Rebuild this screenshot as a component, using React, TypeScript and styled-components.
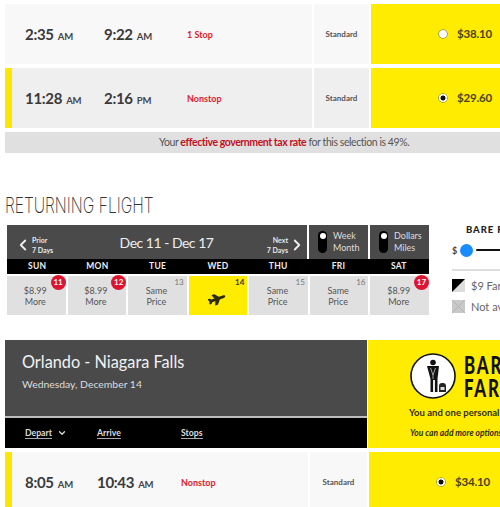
import React from "react";
import styled, { createGlobalStyle } from "styled-components";
import { ChevronLeft, ChevronRight, ChevronDown } from "lucide-react";
import { FaPlane } from "react-icons/fa";

const Global = createGlobalStyle`
  html, body { margin: 0; padding: 0; background: #fff; overflow: hidden; }
  * { box-sizing: border-box; }
`;
const Viewport = styled.div`
  width: 500px; height: 507px; overflow: hidden;
  font-family: "Lato", "Noto Sans", sans-serif; color: #444;
`;
const Page = styled.div`
  width: 700px; padding: 4px 0 0 5px;
  display: flex; flex-direction: column; align-items: flex-start;
`;
const Row = styled.div<{ $left: number; $std: number; $h: number; $top?: number }>`
  display: grid; width: 695px; height: ${p => p.$h}px; flex: none;
  grid-template-columns: ${p => p.$left}px ${p => p.$std}px 1fr;
  column-gap: 2px; margin-top: ${p => p.$top ?? 0}px;
`;
const Info = styled.div<{ $bg: string; $bar?: boolean; $dep: number; $arr: number }>`
  background: ${p => p.$bg};
  border-left: ${p => (p.$bar ? "7px solid #ffe600" : "0")};
  padding-left: ${p => (p.$bar ? 13 : 20)}px;
  display: grid; align-items: center;
  grid-template-columns: ${p => p.$dep}px ${p => p.$arr}px 1fr;
`;
const Time = styled.span`
  font-size: 15px; font-weight: 700; color: #3a3a3a; letter-spacing: -0.3px; white-space: nowrap;
`;
const Meridiem = styled.span`
  font-size: 9.5px; font-weight: 700; margin-left: 4px; color: #444; letter-spacing: -0.2px;
`;
const Stop = styled.span`
  font-size: 9px; font-weight: 700; color: #dd1c2e;
`;
const Std = styled.div<{ $bg: string }>`
  background: ${p => p.$bg};
  display: flex; align-items: center; justify-content: center;
  font-size: 8px; font-weight: 700; color: #555; padding-bottom: 1px;
`;
const Fare = styled.div<{ $pad: number }>`
  background: #ffec00; display: flex; align-items: center; gap: 10px;
  padding-left: ${p => p.$pad}px; padding-bottom: 1px;
`;
const Radio = styled.span<{ $on?: boolean }>`
  width: 8px; height: 8px; border-radius: 50%; flex: none;
  background: ${p => (p.$on ? "radial-gradient(circle, #111 0 2.2px, #fff 2.8px)" : "#fff")};
  box-shadow: 0 0 0 0.6px #666;
`;
const Price = styled.span`
  font-size: 11.5px; font-weight: 700; color: #4a4318; letter-spacing: -0.2px;
`;
const Notice = styled.div`
  width: 695px; height: 21px; margin-top: 4px; background: #e0e0e0; letter-spacing: -0.43px;
  font-size: 10.5px; line-height: 21px; color: #555; padding-left: 154px; white-space: nowrap;
`;
const Strong = styled.b`
  color: #c3101f; font-weight: 700;
`;
const Heading = styled.h2`
  margin: 39px 0 0 0; height: 26px; font: 200 22px/26px "Inter", sans-serif; color: #333;
  transform: scaleX(0.71); transform-origin: left center; white-space: nowrap;
`;
const CalRow = styled.div`
  display: flex; margin: 7px 0 0 2px; gap: 23px;
`;
const Cal = styled.div`
  width: 422px; display: flex; flex-direction: column;
`;
const CalHead = styled.div`
  height: 34px; display: grid; grid-template-columns: 300px 59px 59px; column-gap: 2px;
`;
const WeekNav = styled.div`
  background: #4a4a4a; display: flex; align-items: center; color: #eee; padding: 6px 1px 0 7px;
`;
const NavNote = styled.div<{ $end?: boolean }>`
  font-size: 7px; font-weight: 700; line-height: 10px; color: #e8e8e8; width: 24px; margin-left: 0;
  text-align: ${p => (p.$end ? "right" : "left")};
`;
const Range = styled.div`
  flex: 1; text-align: center; font-size: 14px; color: #eee; padding: 0 0 6px 13px; letter-spacing: -0.5px;
`;
const ToggleCell = styled.div`
  background: #4a4a4a; display: flex; align-items: center; gap: 6px; padding-left: 9px;
`;
const Pill = styled.div`
  position: relative; width: 9px; height: 22px; border-radius: 5px; background: #000;
  &::after { content: ""; position: absolute; left: 1.5px; top: 2px; width: 6px; height: 6px; border-radius: 50%; background: #fff; }
`;
const ToggleText = styled.div`
  font-size: 9px; line-height: 12px; color: #ddd;
`;
const Days = styled.div`
  height: 15px; background: #000; display: grid; grid-template-columns: repeat(7, 1fr);
`;
const Day = styled.div`
  color: #eee; font-size: 8.5px; font-weight: 700; text-align: center; line-height: 15px; letter-spacing: 0.3px;
`;
const Cells = styled.div`
  margin-top: 2px; display: grid; grid-template-columns: repeat(7, 1fr); column-gap: 2px; height: 39px;
`;
const Cell = styled.div<{ $sel?: boolean }>`
  position: relative; background: ${p => (p.$sel ? "#ffec00" : "#e0e0e0")};
  display: flex; flex-direction: column; align-items: center; justify-content: center;
  font-size: 9px; line-height: 11.5px; color: #555; padding-top: 1px; padding-right: 2px;
`;
const Badge = styled.span`
  position: absolute; top: -1px; right: 0; width: 15px; height: 15px; border-radius: 50%;
  background: #dd1430; color: #fff; font-size: 8px; font-weight: 700; line-height: 14px; text-align: center;
`;
const DayNum = styled.span<{ $sel?: boolean }>`
  position: absolute; top: 1px; right: 3px; font-size: 8px; line-height: 10px;
  color: ${p => (p.$sel ? "#333" : "#777")}; font-weight: ${p => (p.$sel ? 700 : 400)};
`;
const PlaneIcon = styled(FaPlane)`
  width: 18px; height: 18px; color: #2c2a10; transform: rotate(-20deg) scaleY(0.7); margin-top: 5px;
`;
const Legend = styled.div`
  width: 200px; display: flex; flex-direction: column;
`;
const LegendTitle = styled.div`
  font: 900 9.5px/12px "Lato", sans-serif; letter-spacing: 0.9px; color: #222; margin-left: 14px; margin-top: -1px;
`;
const SliderRow = styled.div`
  display: flex; align-items: center; margin-top: 7px; height: 14px; font-size: 9px; font-weight: 700; color: #444;
`;
const Knob = styled.span`
  width: 13px; height: 13px; border-radius: 50%; background: #1b8cff; margin: 0 3px 0 3px; flex: none;
`;
const Track = styled.span`
  width: 140px; height: 2px; background: #111; border-radius: 1px;
`;
const Rule = styled.div`
  height: 2px; background: #ddd; margin-top: 12px; width: 170px;
`;
const Key = styled.div`
  display: flex; align-items: center; gap: 6px; height: 13px; font-size: 11px; color: #666; white-space: nowrap;
  margin-top: 8px;
`;
const Swatch = styled.svg`
  width: 13px; height: 13px; flex: none; display: block;
`;
const Section = styled.div`
  margin-top: 25px; display: grid; grid-template-columns: 362px 1fr; column-gap: 1px; width: 695px; height: 108px;
`;
const SectionMain = styled.div`
  display: flex; flex-direction: column;
`;
const Title = styled.div`
  height: 76px; background: #4a4a4a; padding: 11px 0 0 17px; color: #fff;
`;
const City = styled.div`
  font-size: 16.3px; line-height: 22px; color: #f2f2f2;
`;
const DateText = styled.div`
  font-size: 10.4px; line-height: 14px; margin-top: 4px; color: #ddd;
`;
const SortBar = styled.div`
  border-top: 2px solid #bdbdbd; height: 32px; background: #000;
  display: grid; grid-template-columns: 72px 84px 1fr; align-items: center; padding: 0 0 0 20px;
`;
const SortItem = styled.div`
  display: flex; align-items: center; gap: 5px; color: #ddd; font-size: 8.7px; font-weight: 700;
`;
const SortLabel = styled.span`
  border-bottom: 1px solid #aaa; line-height: 11px;
`;
const Promo = styled.div`
  background: #ffec00; display: flex; flex-direction: column; padding: 13px 0 0 41px; overflow: hidden;
`;
const PromoTop = styled.div`
  display: flex; align-items: center; gap: 8px; margin-left: 1px;
`;
const BareName = styled.div`
  font: 900 24px/23px "Lato", sans-serif; letter-spacing: 2.6px; color: #111;
  transform: scaleX(0.7); transform-origin: left center;
`;
const PromoLine = styled.div`
  font-size: 9.5px; font-weight: 700; color: #332e0a; white-space: nowrap; margin-top: 7px; line-height: 14px;
`;
const PromoNote = styled.div`
  font-size: 8.5px; font-weight: 700; font-style: italic; color: #332e0a; white-space: nowrap; margin-top: 7px;
  line-height: 12px; margin-left: 1px;
`;

type Flight = { dep: string; depM: string; arr: string; arrM: string; stop: string };
const Times: React.FC<Flight> = ({ dep, depM, arr, arrM, stop }) => (
  <>
    <Time>{dep}<Meridiem>{depM}</Meridiem></Time>
    <Time>{arr}<Meridiem>{arrM}</Meridiem></Time>
    <Stop>{stop}</Stop>
  </>
);

const days = ["SUN", "MON", "TUE", "WED", "THU", "FRI", "SAT"];
const cells = [
  { n: 11, a: "$8.99", b: "More", red: true },
  { n: 12, a: "$8.99", b: "More", red: true },
  { n: 13, a: "Same", b: "Price" },
  { n: 14, sel: true },
  { n: 15, a: "Same", b: "Price" },
  { n: 16, a: "Same", b: "Price" },
  { n: 17, a: "$8.99", b: "More", red: true },
];

export default function App() {
  return (
    <Viewport>
      <Global />
      <Page>
        <Row $left={307} $std={55} $h={60}>
          <Info $bg="#f8f8f8" $dep={79} $arr={83}>
            <Times dep="2:35" depM="AM" arr="9:22" arrM="AM" stop="1 Stop" />
          </Info>
          <Std $bg="#f8f8f8">Standard</Std>
          <Fare $pad={68}><Radio /><Price>$38.10</Price></Fare>
        </Row>
        <Row $left={307} $std={55} $h={60} $top={4}>
          <Info $bg="#f0eff0" $bar $dep={79} $arr={83}>
            <Times dep="11:28" depM="AM" arr="2:16" arrM="PM" stop="Nonstop" />
          </Info>
          <Std $bg="#f0eff0">Standard</Std>
          <Fare $pad={68}><Radio $on /><Price>$29.60</Price></Fare>
        </Row>
        <Notice>Your <Strong>effective government tax rate</Strong> for this selection is 49%.</Notice>
        <Heading>RETURNING FLIGHT</Heading>
        <CalRow>
          <Cal>
            <CalHead>
              <WeekNav>
                <ChevronLeft size={18} strokeWidth={2.4} />
                <NavNote>Prior<br />7 Days</NavNote>
                <Range>Dec 11 - Dec 17</Range>
                <NavNote $end>Next<br />7 Days</NavNote>
                <ChevronRight size={18} strokeWidth={2.4} />
              </WeekNav>
              <ToggleCell><Pill /><ToggleText>Week<br />Month</ToggleText></ToggleCell>
              <ToggleCell><Pill /><ToggleText>Dollars<br />Miles</ToggleText></ToggleCell>
            </CalHead>
            <Days>{days.map(d => <Day key={d}>{d}</Day>)}</Days>
            <Cells>
              {cells.map(c => (
                <Cell key={c.n} $sel={c.sel}>
                  {c.red ? <Badge>{c.n}</Badge> : <DayNum $sel={c.sel}>{c.n}</DayNum>}
                  {c.sel ? <PlaneIcon /> : <><span>{c.a}</span><span>{c.b}</span></>}
                </Cell>
              ))}
            </Cells>
          </Cal>
          <Legend>
            <LegendTitle>BARE FARE</LegendTitle>
            <SliderRow>$<Knob /><Track /></SliderRow>
            <Rule />
            <Key>
              <Swatch viewBox="0 0 13 13"><rect width="13" height="13" fill="#ddd" /><polygon points="0,0 13,0 0,13" fill="#000" /></Swatch>
              $9 Fare Club
            </Key>
            <Key>
              <Swatch viewBox="0 0 13 13"><rect width="13" height="13" fill="#c9c9c9" /><path d="M0 0L13 13M13 0L0 13" stroke="#b5b5b5" /></Swatch>
              Not available
            </Key>
          </Legend>
        </CalRow>
        <Section>
          <SectionMain>
            <Title>
              <City>Orlando - Niagara Falls</City>
              <DateText>Wednesday, December 14</DateText>
            </Title>
            <SortBar>
              <SortItem><SortLabel>Depart</SortLabel><ChevronDown size={10} strokeWidth={3} /></SortItem>
              <SortItem><SortLabel>Arrive</SortLabel></SortItem>
              <SortItem><SortLabel>Stops</SortLabel></SortItem>
            </SortBar>
          </SectionMain>
          <Promo>
            <PromoTop>
              <svg width="46" height="46" viewBox="0 0 46 46">
                <circle cx="23" cy="23" r="22" fill="#fff" stroke="#111" strokeWidth="1.6" />
                <circle cx="23" cy="9.5" r="2.8" fill="#111" />
                <path d="M17 13h12l-1.5 13v13h-2.6V27h-1.8v12h-2.6V26z" fill="#111" />
                <path d="M20.5 15l2.5 7 2.5-7M23 22v4" stroke="#fff" strokeWidth="0.6" fill="none" />
                <path d="M29 33a3 3 0 0 1 3-3h1a3 3 0 0 1 3 3v6h-7z" fill="#222" />
                <rect x="30.5" y="34" width="4" height="3" fill="#ddd" />
              </svg>
              <BareName>BARE<br />FARE</BareName>
            </PromoTop>
            <PromoLine>You and one personal item</PromoLine>
            <PromoNote>You can add more options later</PromoNote>
          </Promo>
        </Section>
        <Row $left={303} $std={57} $h={60} $top={4}>
          <Info $bg="#f8f8f8" $bar $dep={72} $arr={84}>
            <Times dep="8:05" depM="AM" arr="10:43" arrM="AM" stop="Nonstop" />
          </Info>
          <Std $bg="#f8f8f8">Standard</Std>
          <Fare $pad={68}><Radio $on /><Price>$34.10</Price></Fare>
        </Row>
      </Page>
    </Viewport>
  );
}
